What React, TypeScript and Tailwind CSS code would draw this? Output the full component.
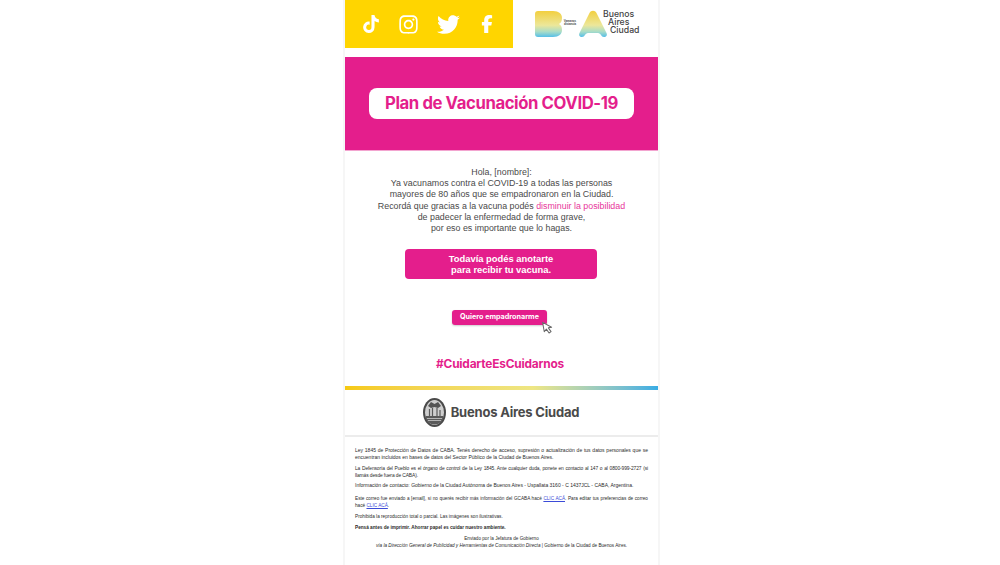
import { FaTiktok, FaInstagram, FaTwitter, FaFacebookF } from "react-icons/fa6"

function BaLogo() {
    return (
        <svg width="74" height="28" viewBox="0 0 74 28">
            <defs>
                <linearGradient id="baGrad" x1="0" y1="0" x2="0" y2="1">
                    <stop offset="0" stopColor="#f2cf3f" />
                    <stop offset="0.55" stopColor="#ece79a" />
                    <stop offset="0.8" stopColor="#a9dcc8" />
                    <stop offset="1" stopColor="#55bfe8" />
                </linearGradient>
            </defs>
            <path d="M3 1h15c6 0 9 3 9 7 0 3-1 5-3 6 2 1 3 3 3 6 0 4-3 7-9 7H3c-2 0-3-1-3-3V4c0-2 1-3 3-3z" fill="url(#baGrad)" />
            <path d="M47 27c-2.500 0-3.500-2-2.500-4l10-20c1.500-3 5.500-3 7 0l10 20c1 2 0 4-2.500 4-3 0-3-4-6-4h-10c-3 0-3 4-6 4z" fill="url(#baGrad)" />
        </svg>
    )
}

function Seal() {
    return (
        <svg width="23" height="29" viewBox="0 0 23 29">
            <ellipse cx="11.500" cy="14.500" rx="11.500" ry="14.500" fill="#4a4a4a" />
            <ellipse cx="11.500" cy="14.500" rx="9.500" ry="12.500" fill="#cfcfcf" />
            <path d="M2.500 18h18c-.5 5-4.500 8.500-9 8.500s-8.500-3.500-9-8.500z" fill="#5a5a5a" />
            <path d="M5 8l3-4 3.500 2 3.500-2 3 4-3 2-3.500-1-3.500 1z" fill="#555" />
            <path d="M6.500 11v7M9.500 10v8M14 10v8M17 12v6" stroke="#5a5a5a" strokeWidth="1.200" />
            <path d="M4 20.500h15M5 22.500h13" stroke="#ddd" strokeWidth="0.700" />
        </svg>
    )
}

function Cursor() {
    return (
        <svg className="absolute left-[90px] top-[10px]" width="13" height="15" viewBox="0 0 13 15">
            <path d="M1.500 1.500v9.500l2.500-2.200 2 4.300 2.200-1-2-4.200h3.300z" transform="rotate(-10 6 7)" fill="#fff" stroke="#666" strokeWidth="1" strokeLinejoin="round" />
        </svg>
    )
}

export default function App() {
    return (
        <div className="min-h-[565px] bg-white flex justify-center font-['Liberation_Sans',sans-serif]">
            <div className="w-[317px] h-[565px] overflow-hidden border-x-2 border-[#f6f6f6] ml-[3px]">
                <div className="flex h-[48px]">
                    <div className="w-[168px] bg-[#ffd500] flex items-center gap-[18px] pl-[17px] text-white">
                        <FaTiktok size={18} />
                        <FaInstagram size={21} />
                        <FaTwitter size={23} />
                        <FaFacebookF size={18} />
                    </div>
                    <div className="flex-1 flex items-center pl-[22px] relative">
                        <BaLogo />
                        <div className="absolute left-[47px] top-[20px] w-[20px] text-center text-[2.800px] leading-[3.400px] font-bold text-[#444]">
                            Vamanos
                            <br />
                            distancia
                        </div>
                        <div className="absolute left-[90px] top-[10px] text-[8.700px] leading-[8px] font-['Inter',sans-serif] font-medium text-[#444]">
                            <div>Buenos</div>
                            <div className="pl-[5px]">Aires</div>
                            <div className="pl-[7px]">Ciudad</div>
                        </div>
                    </div>
                </div>
                <div className="mt-[9px] h-[94px] bg-[#e41e8c] border-b border-[#f3a5d0] flex items-center justify-center">
                    <div className="w-[265px] h-[31px] rounded-[8px] bg-white flex items-center justify-center font-['Inter',sans-serif] font-bold text-[16.700px] tracking-[-0.4px] text-[#e41e8c]">
                        Plan de Vacunación COVID-19
                    </div>
                </div>
                <div className="mt-[16px] text-center text-[8.850px] leading-[11.200px] text-[#4a4a4a]">
                    <p>Hola, [nombre]:</p>
                    <p>Ya vacunamos contra el COVID-19 a todas las personas</p>
                    <p>mayores de 80 años que se empadronaron en la Ciudad.</p>
                    <p>
                        Recordá que gracias a la vacuna podés <span className="text-[#e8379b]">disminuir la posibilidad</span>
                    </p>
                    <p>de padecer la enfermedad de forma grave,</p>
                    <p>por eso es importante que lo hagas.</p>
                </div>
                <div className="mt-[15px] ml-[60px] w-[192px] h-[30px] rounded-[4px] bg-[#e41e8c] flex flex-col items-center justify-center text-white text-[9.400px] leading-[11.500px] font-bold">
                    <span>Todavía podés anotarte</span>
                    <span>para recibir tu vacuna.</span>
                </div>
                <div className="mt-[31px] ml-[107px] w-[95px] relative">
                    <div className="h-[15px] rounded-[3px] bg-[#e41e8c] shadow-[0_1px_2px_rgba(0,0,0,0.2)] flex items-center justify-center text-white text-[7.200px] font-bold font-['Inter',sans-serif]">
                        Quiero empadronarme
                    </div>
                    <Cursor />
                </div>
                <div className="mt-[31px] pr-[3px] text-center text-[#e41e8c] font-['Inter',sans-serif] font-bold text-[11.900px] leading-[16px] tracking-[-0.2px]">
                    #CuidarteEsCuidarnos
                </div>
                <div className="mt-[14px] h-[4px] bg-gradient-to-r from-[#f6c90e] via-[#eee683] via-60% to-[#37ace4]" />
                <div className="h-[47px] flex items-center justify-center gap-[5px] border-b-2 border-[#ececec] pr-[1px]">
                    <Seal />
                    <span className="font-['Inter',sans-serif] font-bold text-[13px] tracking-[-0.2px] text-[#4a4a4a]">Buenos Aires Ciudad</span>
                </div>
                <div className="px-[10px] pt-[10px] text-[5px] leading-[7px] text-[#2a2a2a]">
                    <p className="text-justify">
                        Ley 1845 de Protección de Datos de CABA. Tenés derecho de acceso, supresión o actualización de tus datos personales que se encuentran incluidos en bases de datos del Sector Público de la Ciudad de Buenos Aires.
                    </p>
                    <p className="text-justify mt-[4px] text-[4.900px] tracking-[-0.1px]">
                        La Defensoría del Pueblo es el órgano de control de la Ley 1845. Ante cualquier duda, ponete en contacto al 147 o al <span className="whitespace-nowrap">0800-999-2727</span> (si llamás desde fuera de CABA).
                    </p>
                    <p className="mt-[3px]">
                        Información de contacto: Gobierno de la Ciudad Autónoma de Buenos Aires - Uspallata 3160 - C 1437JCL - CABA, Argentina.
                    </p>
                    <p className="text-justify mt-[6px] text-[4.700px]">
                        Este correo fue enviado a [email], si no querés recibir más información del GCABA hacé <span className="text-[#3b4bd8] underline">CLIC ACÁ</span>. Para editar tus preferencias de correo hacé <span className="text-[#3b4bd8] underline">CLIC ACÁ</span>.
                    </p>
                    <p className="mt-[4px] text-[4.700px]">Prohibida la reproducción total o parcial. Las imágenes son ilustrativas.</p>
                    <p className="mt-[4px] text-[4.700px] font-bold">Pensá antes de imprimir. Ahorrar papel es cuidar nuestro ambiente.</p>
                    <p className="mt-[4px] text-center text-[4.650px]">Enviado por la Jefatura de Gobierno</p>
                    <p className="text-center text-[4.650px]">
                        <em>vía la Dirección General de Publicidad y Herramientas de Comunicación Directa</em> | Gobierno de la Ciudad de Buenos Aires.
                    </p>
                </div>
            </div>
        </div>
    )
}
